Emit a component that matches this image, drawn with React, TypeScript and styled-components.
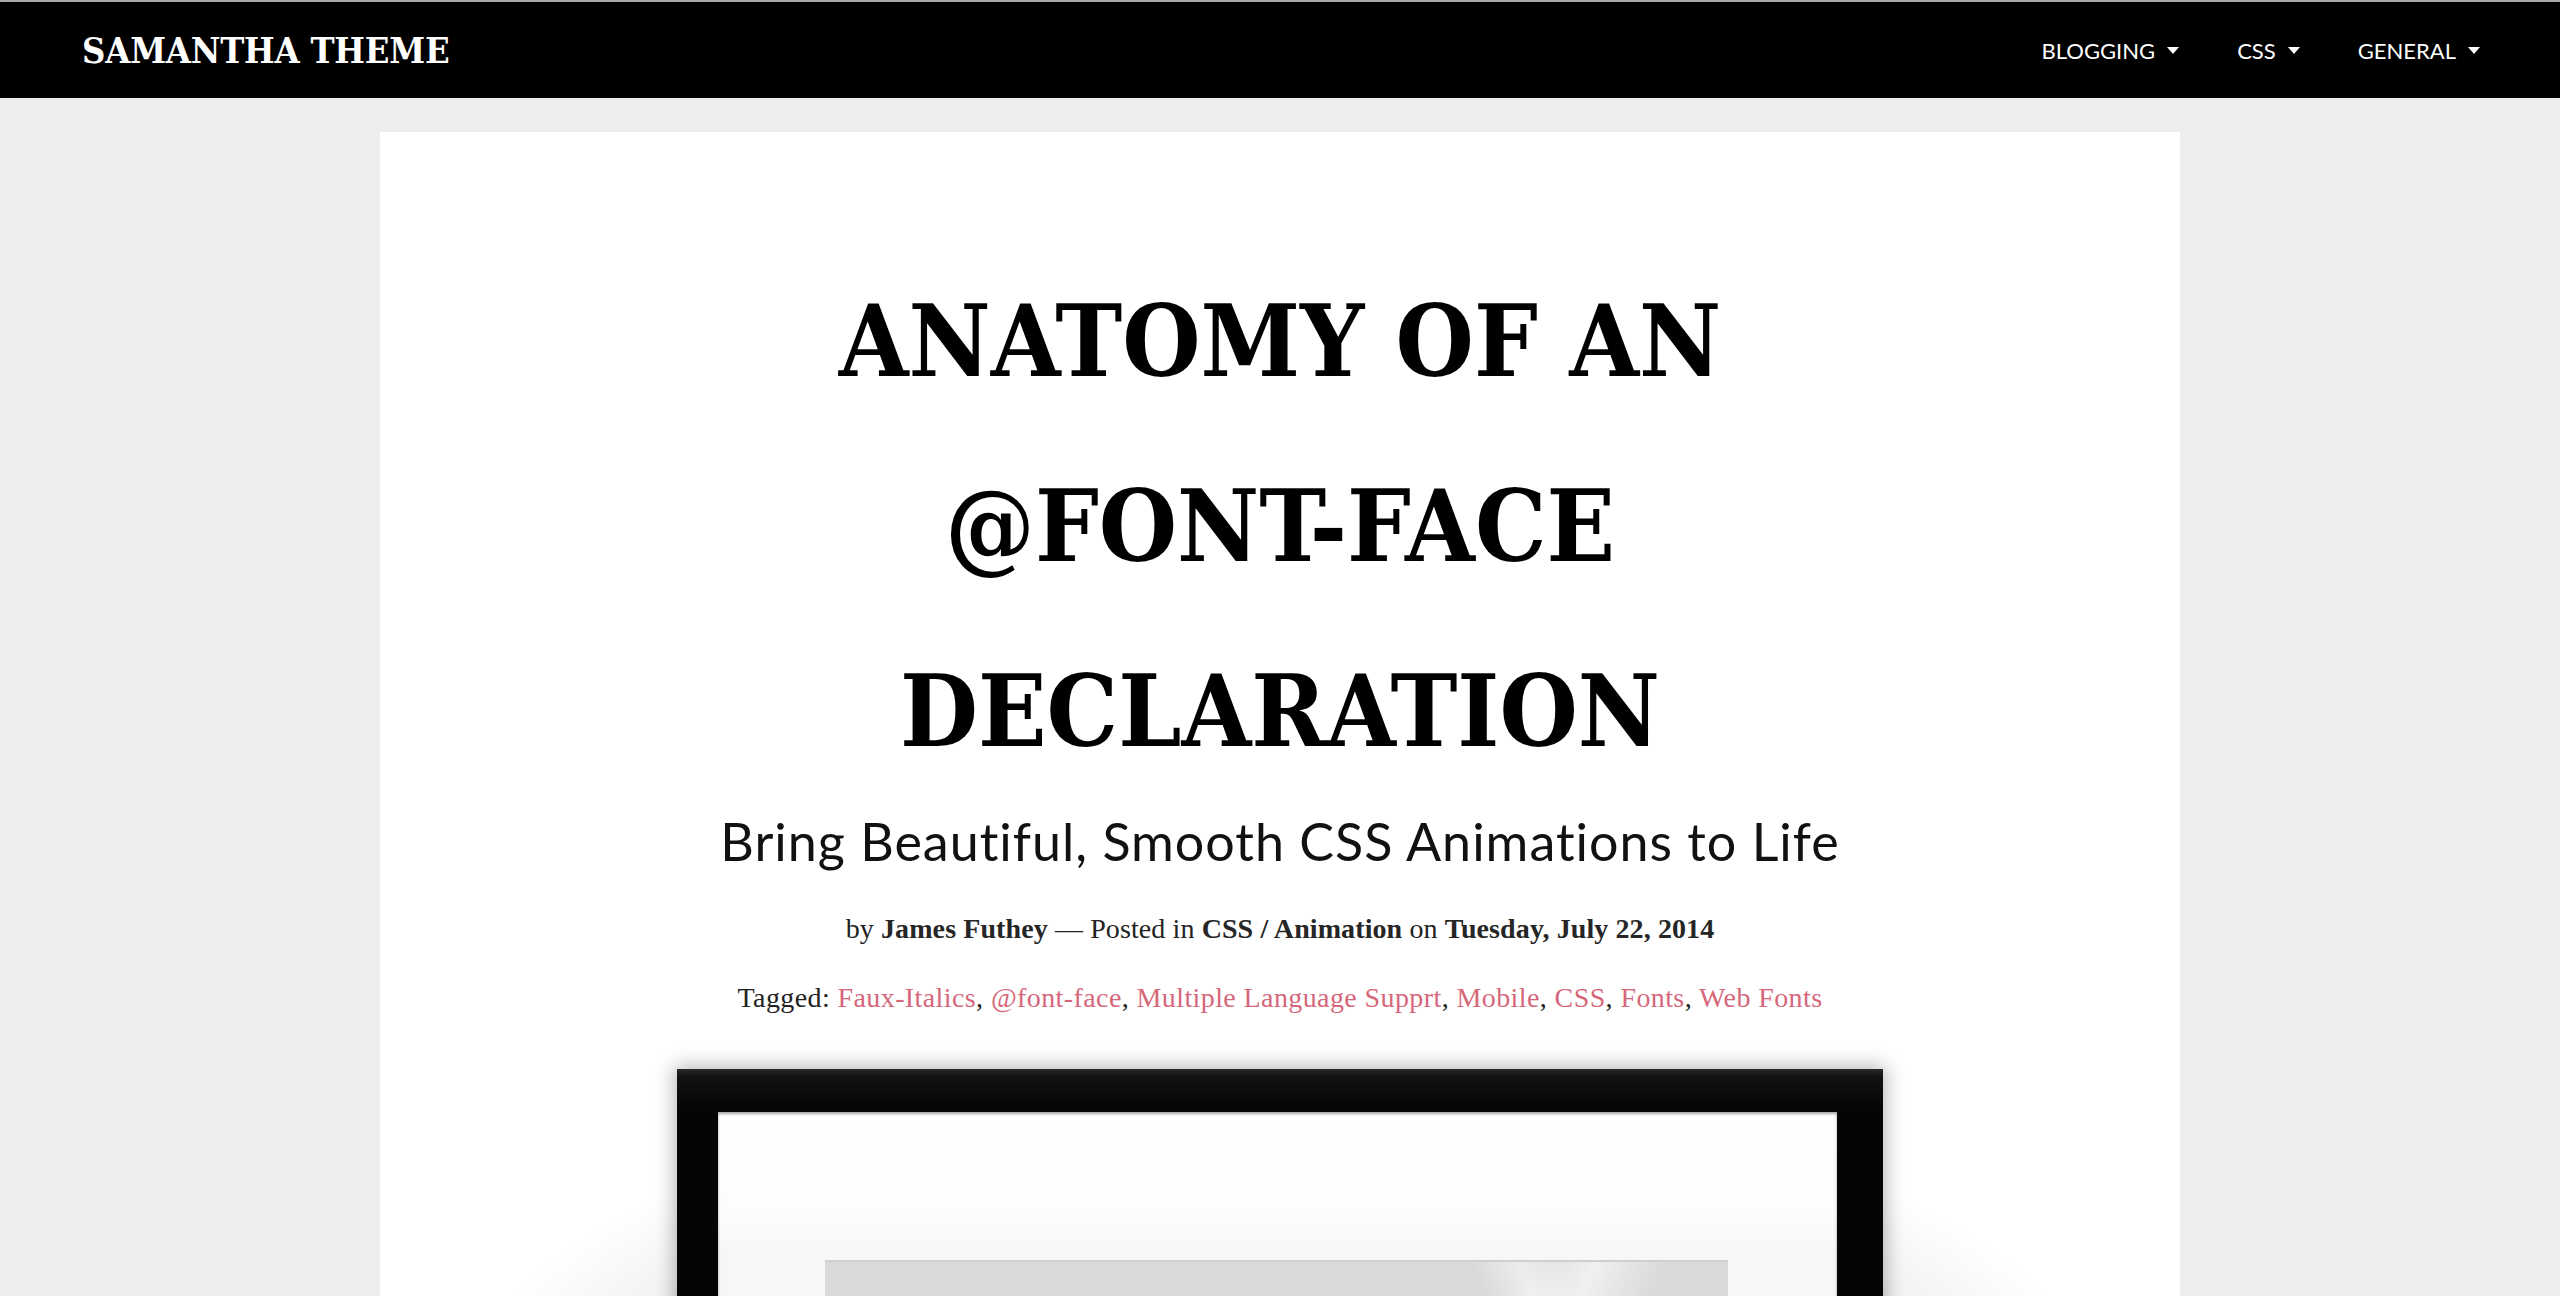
import * as React from "react";
import styled, { createGlobalStyle } from "styled-components";

const GlobalStyle = createGlobalStyle`
  html, body {
    margin: 0;
    padding: 0;
    background: #eeeeee;
  }
  * {
    box-sizing: border-box;
  }
`;

const Header = styled.header`
  display: flex;
  align-items: center;
  justify-content: space-between;
  height: 98px;
  padding: 0 80px 0 82px;
  background: #000;
  border-top: 2px solid #a8a8a8;
`;

const Logo = styled.a`
  font-family: "DejaVu Serif Condensed", "DejaVu Serif", serif;
  font-weight: 700;
  font-size: 36px;
  color: #fff;
  text-decoration: none;
  letter-spacing: -0.2px;
`;

const Nav = styled.nav`
  display: flex;
  align-items: center;
  gap: 58px;
`;

const NavItem = styled.a`
  display: flex;
  align-items: center;
  gap: 12px;
  font-family: Lato, "Open Sans", sans-serif;
  font-size: 22px;
  color: #fff;
  text-transform: uppercase;
  text-decoration: none;
`;

const Caret = styled.span`
  width: 0;
  height: 0;
  border-left: 6px solid transparent;
  border-right: 6px solid transparent;
  border-top: 7px solid #fff;
`;

const Main = styled.main`
  padding-top: 34px;
`;

const Card = styled.article`
  width: 1800px;
  margin: 0 auto;
  padding-top: 117px;
  background: #fff;
  text-align: center;
`;

const Title = styled.h1`
  max-width: 1300px;
  margin: 0 auto;
  font-family: "DejaVu Serif Condensed", "DejaVu Serif", serif;
  font-weight: 700;
  font-size: 100px;
  line-height: 185px;
  color: #000;
  text-transform: uppercase;
`;

const Subtitle = styled.h2`
  margin: 6px 0 0;
  font-family: Lato, "Open Sans", sans-serif;
  font-weight: 400;
  font-size: 52px;
  line-height: 62px;
  letter-spacing: 1px;
  font-variant-ligatures: none;
  color: #111;
`;

const Meta = styled.p<{ $gap: number; $spacing: number }>`
  margin: ${(p) => p.$gap}px 0 0;
  font-family: "Liberation Serif", "DejaVu Serif", serif;
  font-size: 28px;
  line-height: 32px;
  letter-spacing: ${(p) => p.$spacing}px;
  color: #222;
`;

const Strong = styled.span`
  font-weight: 700;
  color: #262626;
`;

const Tag = styled.a`
  color: #d6677b;
  text-decoration: none;
`;

const Photo = styled.div`
  width: 1600px;
  height: 520px;
  margin: 35px auto 0;
  padding-top: 20px;
  display: flex;
  justify-content: center;
  background: radial-gradient(
    ellipse 810px 300px at 50% 340px,
    rgba(0, 0, 0, 0.2) 0%,
    rgba(0, 0, 0, 0.13) 55%,
    rgba(0, 0, 0, 0) 100%
  );
`;

const Frame = styled.div`
  width: 1206px;
  height: 760px;
  padding: 43px 46px 0 41px;
  background: linear-gradient(#2a2a2a 0, #111 8px, #050505 40px);
  box-shadow: 0 0 18px 3px rgba(0, 0, 0, 0.28);
`;

const Mat = styled.div`
  height: 100%;
  padding: 148px 109px 0 107px;
  background: linear-gradient(#ffffff 0, #fdfdfd 100px, #f7f7f7 140px);
  box-shadow: inset 0 2px 3px rgba(0, 0, 0, 0.35);
`;

const Print = styled.div`
  height: 100%;
  background:
    linear-gradient(115deg, transparent 60%, rgba(255, 255, 255, 0.6) 66%, transparent 72%),
    linear-gradient(65deg, transparent 78%, rgba(255, 255, 255, 0.5) 82%, transparent 86%),
    linear-gradient(#dadada, #e8e8e8);
  border-top: 2px solid #cfcfcf;
`;

const tags = [
  "Faux-Italics",
  "@font-face",
  "Multiple Language Supprt",
  "Mobile",
  "CSS",
  "Fonts",
  "Web Fonts",
];

const App = () => {
  return (
    <>
      <GlobalStyle />
      <Header>
        <Logo href="#">SAMANTHA THEME</Logo>
        <Nav>
          {["Blogging", "CSS", "General"].map((item) => (
            <NavItem href="#" key={item}>
              {item}
              <Caret />
            </NavItem>
          ))}
        </Nav>
      </Header>
      <Main>
        <Card>
          <Title>Anatomy of an @font-face declaration</Title>
          <Subtitle>Bring Beautiful, Smooth CSS Animations to Life</Subtitle>
          <Meta $gap={41} $spacing={0.1}>
            by <Strong>James Futhey</Strong> — Posted in{" "}
            <Strong>CSS / Animation</Strong> on{" "}
            <Strong>Tuesday, July 22, 2014</Strong>
          </Meta>
          <Meta $gap={37} $spacing={0.4}>
            Tagged:{" "}
            {tags.map((tag, i) => (
              <React.Fragment key={tag}>
                <Tag href="#">{tag}</Tag>
                {i < tags.length - 1 ? ", " : ""}
              </React.Fragment>
            ))}
          </Meta>
          <Photo>
            <Frame>
              <Mat>
                <Print />
              </Mat>
            </Frame>
          </Photo>
        </Card>
      </Main>
    </>
  );
};

export default App;
